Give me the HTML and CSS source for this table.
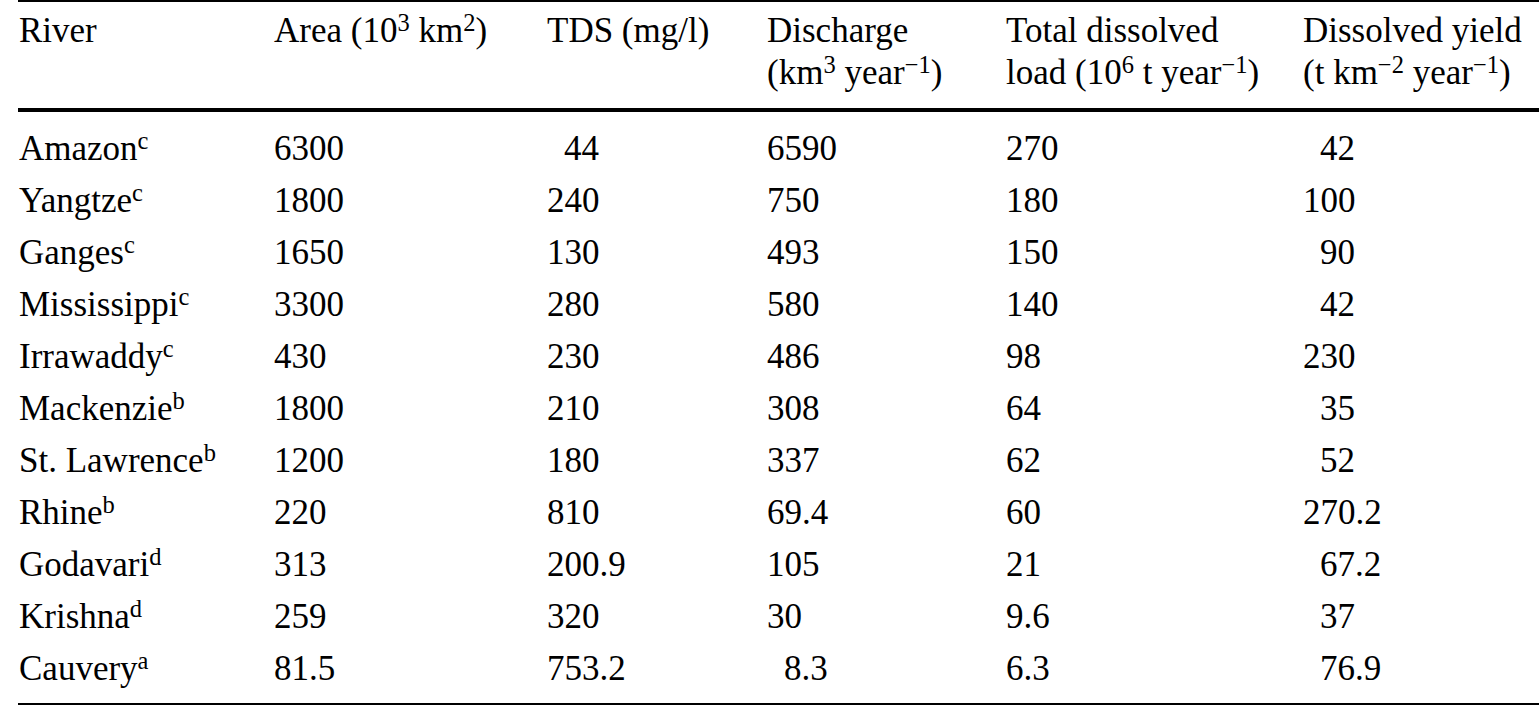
FILE: index.html
```html
<!DOCTYPE html>
<html lang="en">
<head>
<meta charset="utf-8">
<title>River dissolved loads</title>
<link rel="stylesheet" href="styles.css">
</head>
<body>
<table class="rivers">
  <colgroup>
    <col class="c-river">
    <col class="c-area">
    <col class="c-tds">
    <col class="c-dis">
    <col class="c-load">
    <col class="c-yield">
  </colgroup>
  <thead>
    <tr>
      <th>River</th>
      <th>Area (10<sup>3</sup> km<sup>2</sup>)</th>
      <th>TDS (mg/l)</th>
      <th>Discharge<br>(km<sup>3</sup> year<sup>&minus;1</sup>)</th>
      <th>Total dissolved<br>load (10<sup>6</sup> t year<sup>&minus;1</sup>)</th>
      <th>Dissolved yield<br>(t km<sup>&minus;2</sup> year<sup>&minus;1</sup>)</th>
    </tr>
  </thead>
  <tbody>
    <tr><td>Amazon<sup>c</sup></td><td>6300</td><td class="pad">44</td><td>6590</td><td>270</td><td class="pad">42</td></tr>
    <tr><td>Yangtze<sup>c</sup></td><td>1800</td><td>240</td><td>750</td><td>180</td><td>100</td></tr>
    <tr><td>Ganges<sup>c</sup></td><td>1650</td><td>130</td><td>493</td><td>150</td><td class="pad">90</td></tr>
    <tr><td>Mississippi<sup>c</sup></td><td>3300</td><td>280</td><td>580</td><td>140</td><td class="pad">42</td></tr>
    <tr><td>Irrawaddy<sup>c</sup></td><td>430</td><td>230</td><td>486</td><td>98</td><td>230</td></tr>
    <tr><td>Mackenzie<sup>b</sup></td><td>1800</td><td>210</td><td>308</td><td>64</td><td class="pad">35</td></tr>
    <tr><td>St. Lawrence<sup>b</sup></td><td>1200</td><td>180</td><td>337</td><td>62</td><td class="pad">52</td></tr>
    <tr><td>Rhine<sup>b</sup></td><td>220</td><td>810</td><td>69.4</td><td>60</td><td>270.2</td></tr>
    <tr><td>Godavari<sup>d</sup></td><td>313</td><td>200.9</td><td>105</td><td>21</td><td class="pad">67.2</td></tr>
    <tr><td>Krishna<sup>d</sup></td><td>259</td><td>320</td><td>30</td><td>9.6</td><td class="pad">37</td></tr>
    <tr><td>Cauvery<sup>a</sup></td><td>81.5</td><td>753.2</td><td class="pad">8.3</td><td>6.3</td><td class="pad">76.9</td></tr>
  </tbody>
</table>
</body>
</html>
```
FILE: styles.css
```css
html, body {
  margin: 0;
  padding: 0;
  background: #ffffff;
  overflow: hidden;
}

body {
  padding-left: 18px;
  font-family: "Liberation Serif", "Times New Roman", serif;
  color: #000000;
}

.rivers {
  border-collapse: collapse;
  table-layout: fixed;
  width: 1530px;
  font-size: 35px;
  border-top: 2px solid #000;
  border-bottom: 2px solid #000;
}

.c-river { width: 255px; }
.c-area { width: 273px; }
.c-tds { width: 220px; }
.c-dis { width: 239px; }
.c-load { width: 297px; }
.c-yield { width: 246px; }

.rivers th,
.rivers td {
  text-align: left;
  vertical-align: top;
  padding: 0 0 0 1px;
  white-space: nowrap;
  font-weight: normal;
}

.rivers th {
  line-height: 42px;
  padding-top: 8px;
  padding-bottom: 14px;
}

.rivers thead tr {
  border-bottom: 4px solid #000;
}

.rivers td {
  line-height: 52px;
}

.rivers tbody tr:first-child td {
  padding-top: 11px;
}

.rivers tbody tr:last-child td {
  padding-bottom: 8px;
}

.rivers td.pad {
  padding-left: 18px;
}

.rivers sup {
  font-size: 0.7em;
  line-height: 0;
  vertical-align: 0.45em;
}
```
